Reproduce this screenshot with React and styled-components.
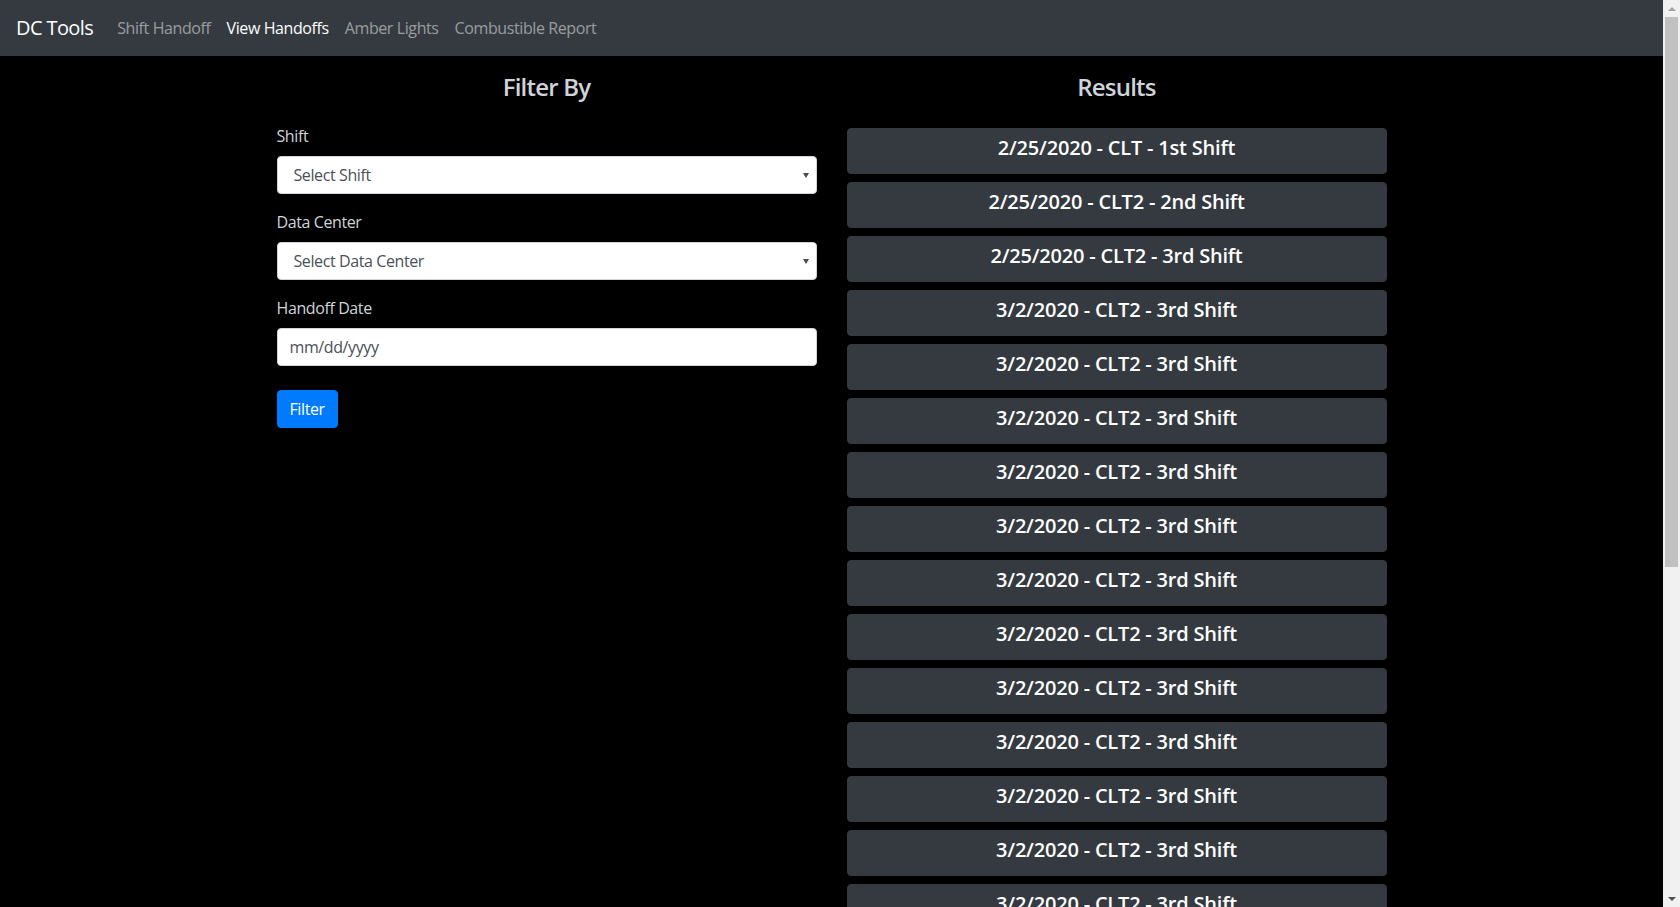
import React from "react";
import styled, { createGlobalStyle } from "styled-components";

const GlobalStyle = createGlobalStyle`
  html, body {
    margin: 0;
    padding: 0;
    height: 100%;
    overflow: hidden;
  }
  body {
    background: #000;
    font-family: "Open Sans", "Noto Sans", "Liberation Sans", sans-serif;
    font-size: 16px;
    line-height: 1.5;
    letter-spacing: -0.4px;
    color: #dee2e6;
  }
  *, *::before, *::after { box-sizing: border-box; }
`;

const Shell = styled.div`
  display: flex;
  height: 100vh;
  overflow: hidden;
`;

const Viewport = styled.div`
  flex: 1;
  min-width: 0;
  overflow: hidden;
`;

const Navbar = styled.nav`
  display: flex;
  align-items: center;
  height: 56px;
  padding: 8px 16px;
  background: #343a40;
`;

const Brand = styled.a`
  display: inline-block;
  padding: 5px 0;
  margin-right: 16px;
  font-size: 20px;
  line-height: 30px;
  letter-spacing: -0.6px;
  color: #fff;
  text-decoration: none;
  white-space: nowrap;
`;

const NavList = styled.ul`
  display: flex;
  list-style: none;
  margin: 0;
  padding: 0;
`;

const NavLink = styled.a`
  display: block;
  padding: 8px;
  line-height: 24px;
  color: ${(p) => (p.$active ? "#fff" : "rgba(255, 255, 255, 0.5)")};
  text-decoration: none;
  white-space: nowrap;
`;

const Container = styled.main`
  max-width: 1140px;
  margin: 0 auto;
  padding: 14px 15px 24px;
`;

const Row = styled.div`
  display: grid;
  grid-template-columns: 1fr 1fr;
  column-gap: 30px;
  align-items: start;
`;

const Column = styled.section`
  min-width: 0;
`;

const Heading = styled.h3`
  margin: 0;
  height: 34px;
  font-size: 24px;
  font-weight: 600;
  line-height: 34px;
  letter-spacing: -0.8px;
  text-align: center;
  color: #ced4da;
`;

const Form = styled.form`
  padding-top: 20px;
`;

const FormGroup = styled.div`
  margin-bottom: 16px;
`;

const Label = styled.label`
  display: block;
  margin-bottom: 8px;
  line-height: 24px;
  color: #ced4da;
`;

const SelectWrap = styled.div`
  position: relative;
  &::after {
    content: "";
    position: absolute;
    right: 8px;
    top: 50%;
    margin-top: -2px;
    border-left: 3.5px solid transparent;
    border-right: 3.5px solid transparent;
    border-top: 5px solid #4a4a4a;
    pointer-events: none;
  }
`;

const Select = styled.select`
  display: block;
  width: 100%;
  height: 38px;
  padding: 6px 24px 6px 16px;
  font-family: inherit;
  font-size: 16px;
  line-height: 24px;
  letter-spacing: -0.4px;
  color: #495057;
  background: #fff;
  border: 1px solid #ced4da;
  border-radius: 4px;
  appearance: none;
  -webkit-appearance: none;
  outline: none;
`;

const TextInput = styled.input`
  display: block;
  width: 100%;
  height: 38px;
  padding: 6px 12px;
  font-family: inherit;
  font-size: 16px;
  line-height: 24px;
  letter-spacing: -0.4px;
  color: #495057;
  background: #fff;
  border: 1px solid #ced4da;
  border-radius: 4px;
  outline: none;
  &::placeholder {
    color: #495057;
    opacity: 1;
  }
`;

const PrimaryButton = styled.button`
  display: inline-block;
  margin-top: 8px;
  padding: 6px 12px;
  font-family: inherit;
  font-size: 16px;
  line-height: 24px;
  letter-spacing: -0.4px;
  color: #fff;
  background: #007bff;
  border: 1px solid #007bff;
  border-radius: 4px;
  cursor: pointer;
`;

const ResultList = styled.div`
  display: flex;
  flex-direction: column;
  gap: 8px;
  padding-top: 24px;
`;

const ResultButton = styled.button`
  display: block;
  width: 100%;
  padding: 7px 12px 5px;
  font-family: inherit;
  color: #fff;
  background: #343a40;
  border: 1px solid #343a40;
  border-radius: 4px;
  text-align: center;
  cursor: pointer;
`;

const ResultTitle = styled.h5`
  margin: 0 0 8px;
  font-size: 20px;
  font-weight: 600;
  line-height: 24px;
  letter-spacing: -0.2px;
`;

const Scrollbar = styled.div`
  flex: 0 0 17px;
  display: flex;
  flex-direction: column;
  height: 100vh;
  background: #f1f1f1;
`;

const ScrollArrow = styled.div`
  flex: 0 0 17px;
  display: flex;
  align-items: center;
  justify-content: center;
  &::before {
    content: "";
    border-left: 4px solid transparent;
    border-right: 4px solid transparent;
    ${(p) =>
      p.$dir === "up"
        ? "border-bottom: 4px solid #a3a3a3;"
        : "border-top: 4px solid #505050;"}
  }
`;

const ScrollTrack = styled.div`
  flex: 1;
  padding: 0 2px;
`;

const ScrollThumb = styled.div`
  height: 550px;
  background: #c1c1c1;
`;

const results = [
  "2/25/2020 - CLT - 1st Shift",
  "2/25/2020 - CLT2 - 2nd Shift",
  "2/25/2020 - CLT2 - 3rd Shift",
  ...Array.from({ length: 21 }, () => "3/2/2020 - CLT2 - 3rd Shift"),
];

const navItems = [
  { label: "Shift Handoff" },
  { label: "View Handoffs", active: true },
  { label: "Amber Lights" },
  { label: "Combustible Report" },
];

export default function App() {
  return (
    <>
      <GlobalStyle />
      <Shell>
        <Viewport>
          <Navbar>
            <Brand href="#">DC Tools</Brand>
            <NavList>
              {navItems.map((n) => (
                <li key={n.label}>
                  <NavLink href="#" $active={n.active}>
                    {n.label}
                  </NavLink>
                </li>
              ))}
            </NavList>
          </Navbar>
          <Container>
            <Row>
              <Column>
                <Heading>Filter By</Heading>
                <Form onSubmit={(e) => e.preventDefault()}>
                  <FormGroup>
                    <Label>Shift</Label>
                    <SelectWrap>
                      <Select defaultValue="">
                        <option value="">Select Shift</option>
                        <option>1st Shift</option>
                        <option>2nd Shift</option>
                        <option>3rd Shift</option>
                      </Select>
                    </SelectWrap>
                  </FormGroup>
                  <FormGroup>
                    <Label>Data Center</Label>
                    <SelectWrap>
                      <Select defaultValue="">
                        <option value="">Select Data Center</option>
                        <option>CLT</option>
                        <option>CLT2</option>
                      </Select>
                    </SelectWrap>
                  </FormGroup>
                  <FormGroup>
                    <Label>Handoff Date</Label>
                    <TextInput type="text" placeholder="mm/dd/yyyy" />
                  </FormGroup>
                  <PrimaryButton type="submit">Filter</PrimaryButton>
                </Form>
              </Column>
              <Column>
                <Heading>Results</Heading>
                <ResultList>
                  {results.map((r, i) => (
                    <ResultButton key={i}>
                      <ResultTitle>{r}</ResultTitle>
                    </ResultButton>
                  ))}
                </ResultList>
              </Column>
            </Row>
          </Container>
        </Viewport>
        <Scrollbar>
          <ScrollArrow $dir="up" />
          <ScrollTrack>
            <ScrollThumb />
          </ScrollTrack>
          <ScrollArrow $dir="down" />
        </Scrollbar>
      </Shell>
    </>
  );
}
